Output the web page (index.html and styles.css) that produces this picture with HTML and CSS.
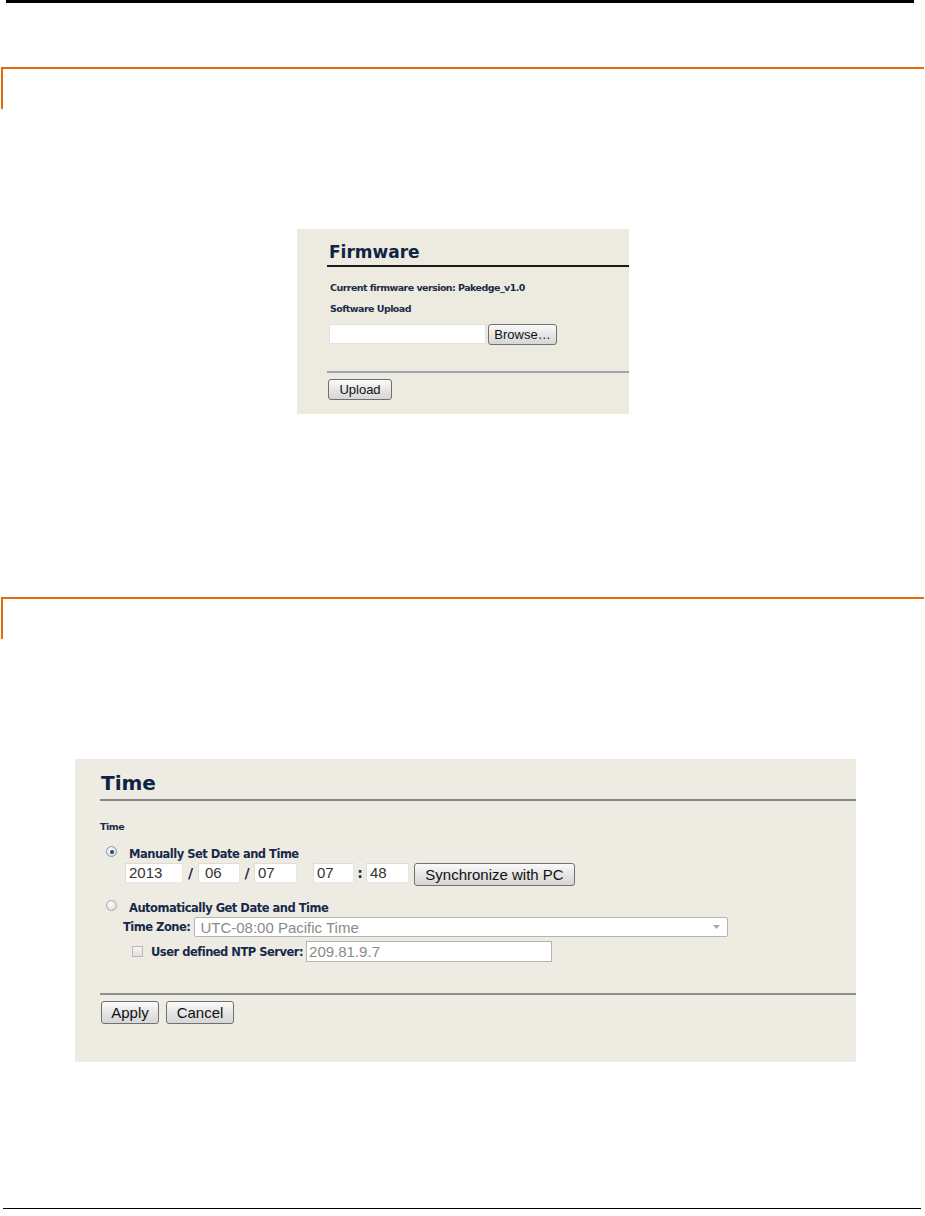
FILE: index.html
```html
<!DOCTYPE html>
<html lang="en">
<head>
<meta charset="utf-8">
<title>Firmware and Time</title>
<link rel="stylesheet" href="styles.css">
</head>
<body>
<div class="page">
  <div class="topbar"></div>

  <div class="section-rule rule-first"></div>

  <div class="fw-panel">
    <div class="fw-title">Firmware</div>
    <div class="fw-body">
      <div class="fw-line fw-line1">Current firmware version: Pakedge_v1.0</div>
      <div class="fw-line fw-line2">Software Upload</div>
      <div class="fw-row">
        <span class="fw-file"></span>
        <span class="btn btn-sm btn-browse">Browse…</span>
      </div>
    </div>
    <div class="fw-sep"></div>
    <div class="fw-actions">
      <span class="btn btn-sm btn-upload">Upload</span>
    </div>
  </div>

  <div class="section-rule rule-second"></div>

  <div class="t-panel">
    <div class="t-title">Time</div>
    <div class="t-body">
      <div class="t-label">Time</div>

      <div class="opt opt-manual">
        <span class="radio on"></span>
        <span class="opt-text">Manually Set Date and Time</span>
      </div>
      <div class="date-row">
        <span class="field f-year">2013</span>
        <span class="sep sep-slash">/</span>
        <span class="field f-month">06</span>
        <span class="sep sep-slash2">/</span>
        <span class="field f-day">07</span>
        <span class="gap-time"></span>
        <span class="field f-hour">07</span>
        <span class="sep sep-colon">:</span>
        <span class="field f-min">48</span>
        <span class="btn btn-md btn-sync">Synchronize with PC</span>
      </div>

      <div class="opt opt-auto">
        <span class="radio"></span>
        <span class="opt-text">Automatically Get Date and Time</span>
      </div>
      <div class="tz-row">
        <span class="opt-text">Time Zone:</span>
        <span class="select">
          <span class="select-text">UTC-08:00 Pacific Time</span>
          <svg class="select-arrow" width="7" height="4" viewBox="0 0 7 4"><path d="M0 0H7L3.5 4Z" fill="#a8a8a8"/></svg>
        </span>
      </div>
      <div class="ntp-row">
        <span class="checkbox"></span>
        <span class="opt-text">User defined NTP Server:</span>
        <span class="ntp-input">209.81.9.7</span>
      </div>
    </div>
    <div class="t-sep"></div>
    <div class="t-actions">
      <span class="btn btn-md btn-apply">Apply</span>
      <span class="btn btn-md btn-cancel">Cancel</span>
    </div>
  </div>

  <div class="bottom-rule"></div>
</div>
</body>
</html>
```

FILE: styles.css
```css
html, body {
  margin: 0;
  padding: 0;
  background: #ffffff;
}

.page {
  width: 925px;
  height: 1216px;
  overflow: hidden;
  font-family: "DejaVu Sans", Verdana, sans-serif;
}

.topbar {
  margin-left: 6px;
  width: 908px;
  height: 3px;
  background: #000000;
}

.section-rule {
  margin-left: 1px;
  width: 921px;
  height: 40px;
  border-top: 2px solid #e36c0a;
  border-left: 2px solid #e36c0a;
}

.rule-first {
  margin-top: 64px;
}

.rule-second {
  margin-top: 183px;
}

/* ---------- Firmware panel ---------- */
.fw-panel {
  margin-top: 120px;
  margin-left: 297px;
  width: 332px;
  height: 185px;
  box-sizing: border-box;
  padding-top: 13px;
  background: #edebe0;
}

.fw-title {
  margin-left: 30px;
  padding: 0 0 3px 2px;
  font-size: 17px;
  line-height: 20px;
  font-weight: bold;
  color: #0d2444;
  border-bottom: 2px solid #1a1a1a;
}

.fw-body {
  margin-left: 32px;
}

.fw-line {
  font-size: 9.5px;
  line-height: 12px;
  font-weight: bold;
  letter-spacing: -0.55px;
  color: #1b2a48;
  padding-left: 1px;
}

.fw-line1 {
  margin-top: 15px;
}

.fw-line2 {
  margin-top: 9px;
}

.fw-row {
  margin-top: 9px;
  display: flex;
  align-items: flex-start;
}

.fw-file {
  width: 157px;
  height: 20px;
  box-sizing: border-box;
  background: #ffffff;
  border: 1px solid #e2e2dc;
}

.btn {
  display: inline-flex;
  align-items: center;
  justify-content: center;
  box-sizing: border-box;
  font-family: "Liberation Sans", Arial, sans-serif;
  color: #111111;
  background: linear-gradient(#fafafa, #e6e6e6 50%, #d6d6d6);
  border: 1px solid #707070;
  border-radius: 3px;
}

.btn-sm {
  height: 21px;
  font-size: 13px;
}

.btn-md {
  height: 23px;
  font-size: 15px;
}

.btn-browse {
  margin-left: 2px;
  width: 69px;
}

.fw-sep {
  margin-top: 26px;
  margin-left: 30px;
  height: 2px;
  background: #9ea6b6;
}

.fw-actions {
  margin-top: 6px;
  margin-left: 31px;
  display: flex;
}

.btn-upload {
  width: 64px;
}

/* ---------- Time panel ---------- */
.t-panel {
  margin-top: 120px;
  margin-left: 75px;
  width: 781px;
  height: 303px;
  box-sizing: border-box;
  padding-top: 12px;
  background: #eeece2;
}

.t-title {
  margin-left: 25px;
  padding: 0 0 4px 1px;
  font-size: 20px;
  line-height: 24px;
  font-weight: bold;
  color: #0d2444;
  border-bottom: 2px solid #858585;
}

.t-body {
  margin-left: 25px;
}

.t-label {
  margin-top: 19px;
  font-size: 9.5px;
  line-height: 14px;
  font-weight: bold;
  letter-spacing: -0.5px;
  color: #1b2a48;
}

.opt {
  display: flex;
  align-items: flex-start;
  margin-left: 6px;
  line-height: 16px;
}

.opt-text {
  font-size: 11.5px;
  font-weight: bold;
  letter-spacing: -0.5px;
  color: #17294a;
  white-space: nowrap;
}

.opt .opt-text {
  margin-left: 12px;
}

.opt-manual {
  margin-top: 12px;
}

.opt-auto {
  margin-top: 14px;
}

.radio {
  position: relative;
  width: 11px;
  height: 11px;
  box-sizing: border-box;
  border-radius: 50%;
  border: 1px solid #a8a8a8;
  background: radial-gradient(circle at 40% 35%, #ffffff, #d4d4d4);
  flex: none;
}

.radio.on {
  border-color: #8a96a8;
  background: radial-gradient(circle at 40% 35%, #ffffff, #c9d2de);
}

.radio.on::after {
  content: "";
  position: absolute;
  left: 2.5px;
  top: 2.5px;
  width: 4px;
  height: 4px;
  border-radius: 50%;
  background: #2a4464;
}

.date-row {
  margin-top: 1px;
  margin-left: 25px;
  display: flex;
  align-items: flex-start;
}

.field {
  height: 20px;
  box-sizing: border-box;
  padding-left: 3px;
  background: #ffffff;
  border: 1px solid #e6e6e2;
  border-top-color: #dcdcd8;
  border-left-color: #dcdcd8;
  font-family: "Liberation Sans", Arial, sans-serif;
  font-size: 15px;
  line-height: 18px;
  color: #333333;
}

.f-year { width: 58px; }
.f-month { width: 42px; padding-left: 6px; }
.f-day { width: 43px; }
.f-hour { width: 41px; }
.f-min { width: 43px; }

.sep {
  display: flex;
  justify-content: center;
  font-family: "DejaVu Sans", Verdana, sans-serif;
  font-weight: bold;
  font-size: 14px;
  line-height: 20px;
  color: #1b2a48;
}

.sep-slash { width: 15px; }
.sep-slash2 { width: 14px; }
.sep-colon { width: 12px; }

.gap-time {
  width: 16px;
}

.btn-sync {
  margin-left: 5px;
  width: 161px;
}

.tz-row {
  margin-top: 1px;
  margin-left: 23px;
  display: flex;
  align-items: center;
  gap: 4px;
}

.select {
  display: flex;
  align-items: center;
  justify-content: space-between;
  width: 534px;
  height: 20px;
  box-sizing: border-box;
  padding: 0 7px 0 5px;
  background: #ffffff;
  border: 1px solid #b4b4b4;
  border-radius: 2px;
}

.select-text,
.ntp-input {
  font-family: "Liberation Sans", Arial, sans-serif;
  font-size: 15px;
  color: #8a8a8a;
}

.ntp-row {
  margin-top: 4px;
  margin-left: 32px;
  display: flex;
  align-items: center;
}

.checkbox {
  width: 11px;
  height: 11px;
  box-sizing: border-box;
  border: 1px solid #b8b8b8;
  background: linear-gradient(#f4f4f4, #e2e2e2);
  margin-right: 8px;
  flex: none;
}

.ntp-input {
  display: flex;
  align-items: center;
  margin-left: 3px;
  width: 246px;
  height: 21px;
  box-sizing: border-box;
  padding-left: 2px;
  background: #ffffff;
  border: 1px solid #b4b4b4;
}

.t-sep {
  margin-top: 31px;
  margin-left: 25px;
  height: 2px;
  background: #8e8e8e;
}

.t-actions {
  margin-top: 6px;
  margin-left: 26px;
  display: flex;
  gap: 7px;
}

.btn-apply { width: 58px; }
.btn-cancel { width: 68px; }

.bottom-rule {
  margin-top: 146px;
  margin-left: 3px;
  width: 918px;
  height: 1px;
  background: #000000;
}
```
